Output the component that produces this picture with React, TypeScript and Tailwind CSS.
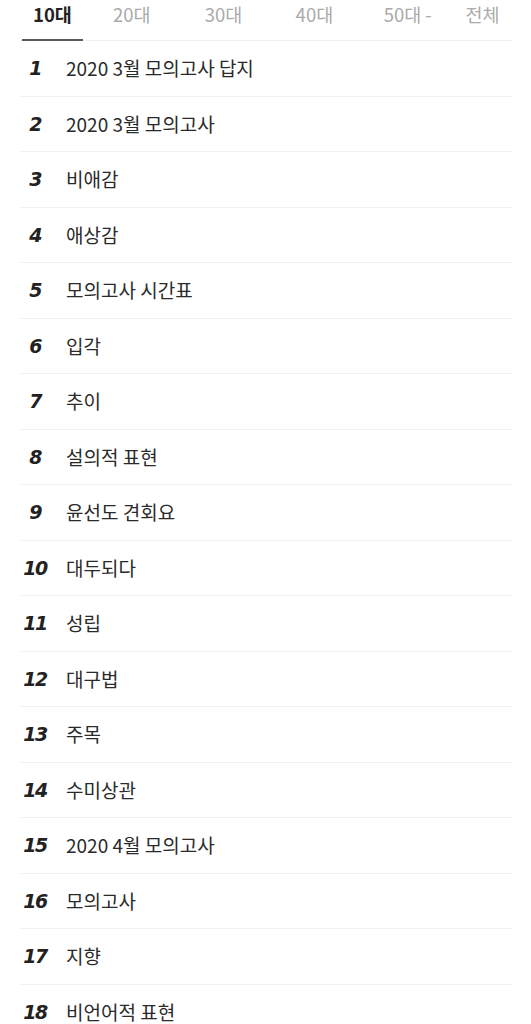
import React from "react";

const items = [
  "2020 3월 모의고사 답지",
  "2020 3월 모의고사",
  "비애감",
  "애상감",
  "모의고사 시간표",
  "입각",
  "추이",
  "설의적 표현",
  "윤선도 견회요",
  "대두되다",
  "성립",
  "대구법",
  "주목",
  "수미상관",
  "2020 4월 모의고사",
  "모의고사",
  "지향",
  "비언어적 표현",
];

const kr = { fontFamily: '"Noto Sans CJK KR", "Noto Sans", sans-serif' };
const num = { fontFamily: '"DejaVu Sans", sans-serif' };

export default function App() {
  return (
    <div className="w-[531px] h-[1024px] overflow-hidden bg-white" style={kr}>
      <div className="ml-[20px] mr-[19px] flex border-b border-[#f0f0f0] h-[41px]">
        <div className="ml-[2px] w-[61px] h-[41px] -mb-px border-b-[2px] border-[#5a5a5a] text-center text-[18.5px] leading-[29px] font-bold text-[#222]">
          10대
        </div>
        <div className="w-[98px] text-center text-[18.5px] leading-[29px] text-[#aaaaaa]">20대</div>
        <div className="w-[86px] text-center text-[18.5px] leading-[29px] text-[#aaaaaa]">30대</div>
        <div className="w-[96px] text-center text-[18.5px] leading-[29px] text-[#aaaaaa]">40대</div>
        <div className="w-[91px] text-center text-[18.5px] leading-[29px] text-[#aaaaaa]">50대 -</div>
        <div className="w-[59px] text-center text-[18.5px] leading-[29px] text-[#aaaaaa]">전체</div>
      </div>
      <ul className="ml-[20px] mr-[19px]">
        {items.map((t, i) => (
          <li
            key={i}
            className="flex items-center h-[55.5px] border-b border-[#f2f2f2]"
          >
            <span
              className="w-[30px] text-center text-[19px] font-bold italic text-[#222] tracking-[-1.5px]"
              style={num}
            >
              {i + 1}
            </span>
            <span className="ml-[16px] text-[19px] text-[#2a2a2a]">{t}</span>
          </li>
        ))}
      </ul>
    </div>
  );
}
